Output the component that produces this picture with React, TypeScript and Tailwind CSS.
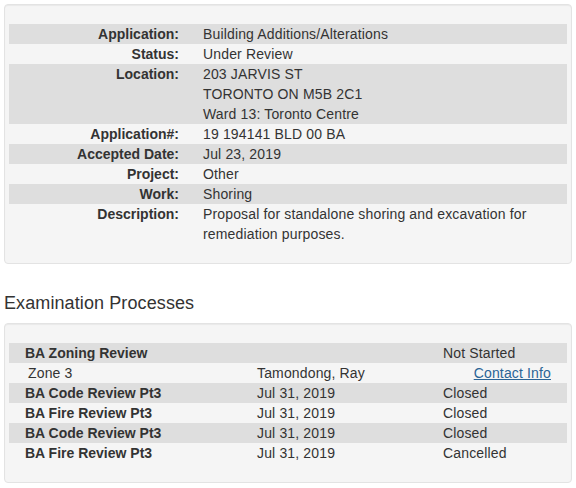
const details = [
  { label: "Application:", lines: ["Building Additions/Alterations"] },
  { label: "Status:", lines: ["Under Review"] },
  { label: "Location:", lines: ["203 JARVIS ST", "TORONTO ON M5B 2C1", "Ward 13: Toronto Centre"] },
  { label: "Application#:", lines: ["19 194141 BLD 00 BA"] },
  { label: "Accepted Date:", lines: ["Jul 23, 2019"] },
  { label: "Project:", lines: ["Other"] },
  { label: "Work:", lines: ["Shoring"] },
  {
    label: "Description:",
    lines: ["Proposal for standalone shoring and excavation for", "remediation purposes."],
  },
];

const processes = [
  { name: "BA Code Review Pt3", date: "Jul 31, 2019", status: "Closed" },
  { name: "BA Fire Review Pt3", date: "Jul 31, 2019", status: "Closed" },
  { name: "BA Code Review Pt3", date: "Jul 31, 2019", status: "Closed" },
  { name: "BA Fire Review Pt3", date: "Jul 31, 2019", status: "Cancelled" },
];

export default function App() {
  return (
    <div className="w-[576px] h-[488px] bg-white px-1 pt-1 text-[14px] leading-5 tracking-[0.15px] text-[#333] font-['Liberation_Sans',Arial,sans-serif]">
      <div className="rounded border border-[#e3e3e3] bg-[#f5f5f5] px-1 py-[19px] shadow-[inset_0_1px_1px_rgba(0,0,0,0.05)]">
        {details.map((row, i) => (
          <div key={i} className={`flex ${i % 2 === 0 ? "bg-[#dedede]" : ""}`}>
            <div className="w-[170px] shrink-0 text-right font-bold tracking-normal">{row.label}</div>
            <div className="pl-6">
              {row.lines.map((line, j) => (
                <div key={j}>{line}</div>
              ))}
            </div>
          </div>
        ))}
      </div>

      <h2 className="mt-[29px] mb-[10px] text-[18px] leading-5 font-normal tracking-[0.1px]">Examination Processes</h2>

      <div className="rounded border border-[#e3e3e3] bg-[#f5f5f5] px-1 py-[19px] shadow-[inset_0_1px_1px_rgba(0,0,0,0.05)]">
        <div className="flex bg-[#dedede]">
          <div className="w-[248px] shrink-0 pl-4 font-bold tracking-normal">BA Zoning Review</div>
          <div className="w-[186px] shrink-0"></div>
          <div>Not Started</div>
        </div>
        <div className="flex">
          <div className="w-[248px] shrink-0 pl-[19px]">Zone 3</div>
          <div className="w-[186px] shrink-0">Tamondong, Ray</div>
          <div className="flex-1 pr-4 text-right">
            <a href="#" className="text-[#2a6496] underline">Contact Info</a>
          </div>
        </div>
        {processes.map((p, i) => (
          <div key={i} className={`flex ${i % 2 === 0 ? "bg-[#dedede]" : ""}`}>
            <div className="w-[248px] shrink-0 pl-4 font-bold tracking-normal">{p.name}</div>
            <div className="w-[186px] shrink-0">{p.date}</div>
            <div>{p.status}</div>
          </div>
        ))}
      </div>
    </div>
  );
}
